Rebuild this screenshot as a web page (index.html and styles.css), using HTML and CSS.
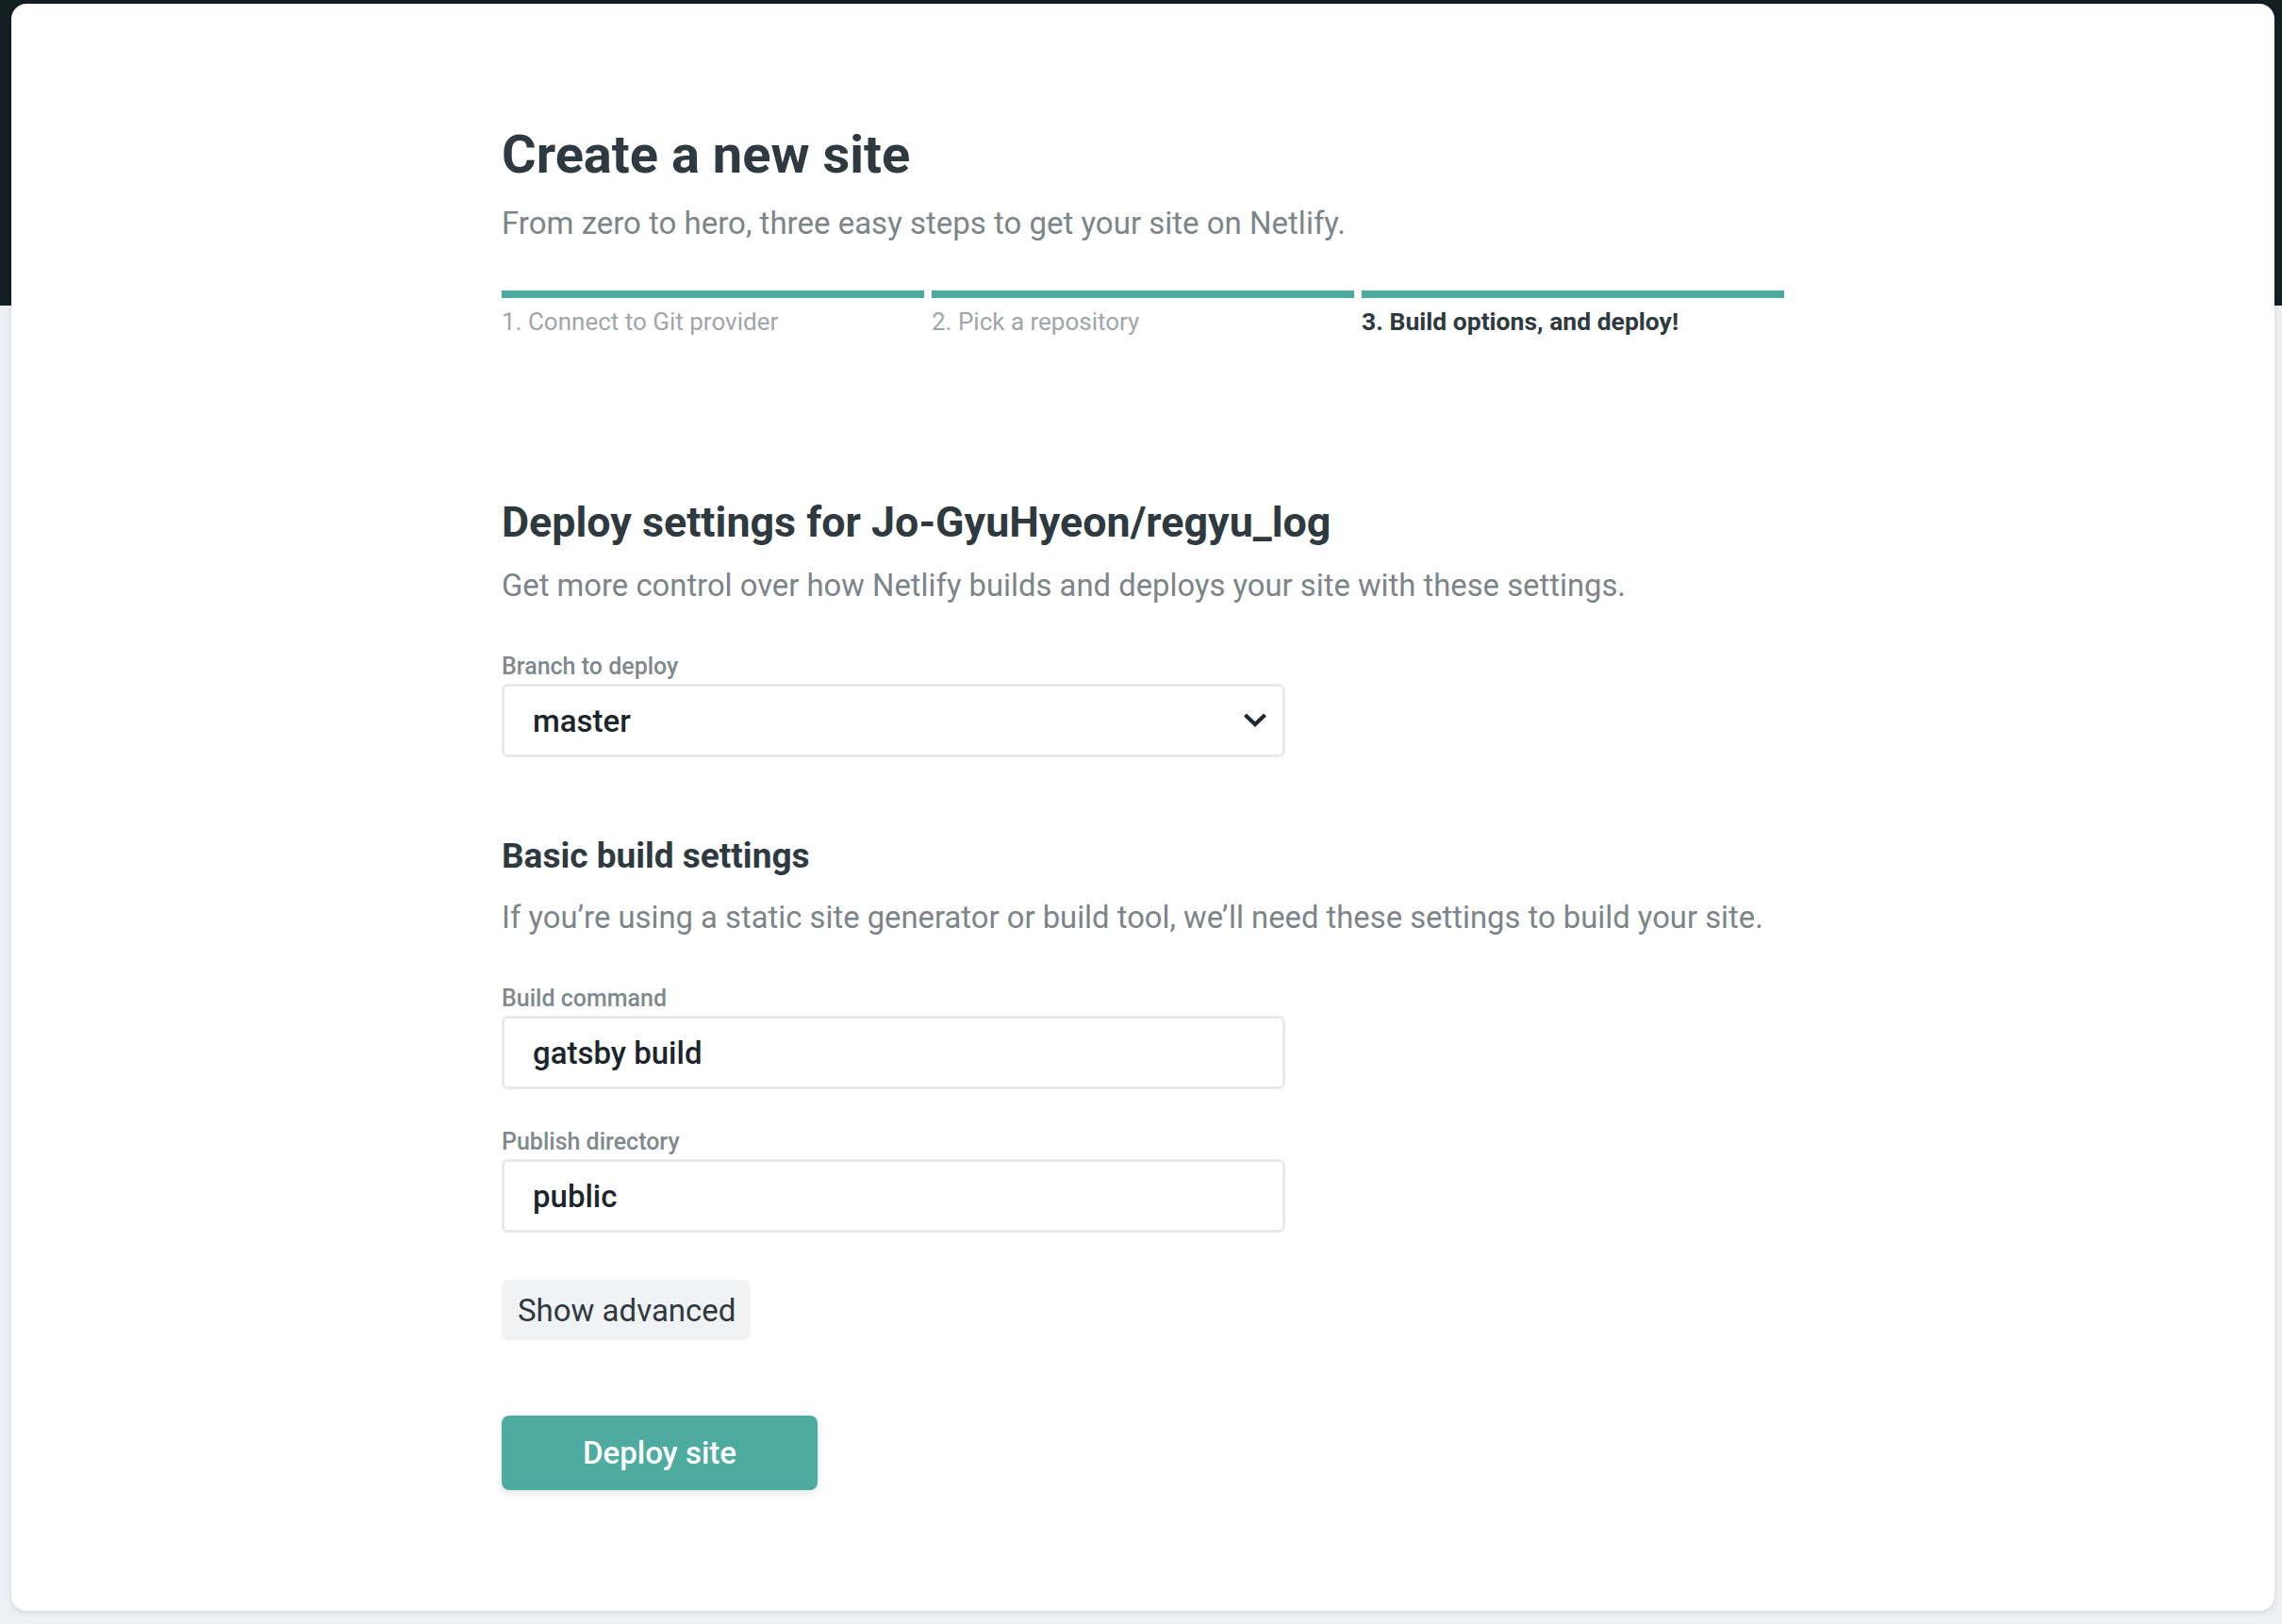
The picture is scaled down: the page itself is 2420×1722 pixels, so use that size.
FILE: index.html
```html
<!DOCTYPE html>
<html lang="en">
<head>
<meta charset="utf-8">
<title>Create a new site</title>
<link rel="stylesheet" href="styles.css">
</head>
<body>
<div class="page">
  <main class="card">
    <div class="content">
      <h1 class="title">Create a new site</h1>
      <p class="lead">From zero to hero, three easy steps to get your site on Netlify.</p>

      <ol class="steps">
        <li class="step"><span class="bar"></span><span class="step-label">1. Connect to Git provider</span></li>
        <li class="step"><span class="bar"></span><span class="step-label">2. Pick a repository</span></li>
        <li class="step step-current"><span class="bar"></span><span class="step-label">3. Build options, and deploy!</span></li>
      </ol>

      <section class="section">
        <h2 class="section-title">Deploy settings for Jo-GyuHyeon/regyu_log</h2>
        <p class="section-desc">Get more control over how Netlify builds and deploys your site with these settings.</p>
        <div class="field">
          <label class="field-label">Branch to deploy</label>
          <div class="control select">
            <span class="control-value">master</span>
            <svg class="chevron" width="24" height="16" viewBox="0 0 24 16" aria-hidden="true"><path d="M3 3.5 L12 12 L21 3.5" fill="none" stroke="#1d2a31" stroke-width="4.2" stroke-linecap="square" stroke-linejoin="miter"/></svg>
          </div>
        </div>
      </section>

      <section class="section section-build">
        <h3 class="sub-title">Basic build settings</h3>
        <p class="section-desc desc-build">If you’re using a static site generator or build tool, we’ll need these settings to build your site.</p>
        <div class="field">
          <label class="field-label">Build command</label>
          <div class="control"><span class="control-value">gatsby build</span></div>
        </div>
        <div class="field field-second">
          <label class="field-label">Publish directory</label>
          <div class="control"><span class="control-value">public</span></div>
        </div>
        <button class="btn-secondary" type="button">Show advanced</button>
      </section>

      <button class="btn-primary" type="button">Deploy site</button>
    </div>
  </main>
</div>
</body>
</html>
```

FILE: styles.css
```css
html, body {
  margin: 0;
  padding: 0;
}

body {
  font-family: Roboto, "Liberation Sans", Arial, sans-serif;
  background: linear-gradient(to bottom, #141f24 0, #141f24 324px, #eef1f4 324px, #eef1f4 100%);
  min-height: 1722px;
  color: #2e3a40;
}

.page {
  padding: 4px 8px 14px 12px;
}

.card {
  background: #ffffff;
  border-radius: 16px;
  box-shadow: 0 2px 6px rgba(30, 45, 60, 0.12);
  padding: 127px 0 128px;
}

.content {
  width: 1360px;
  margin: 0 auto;
}

.title {
  margin: 0;
  font-size: 56px;
  line-height: 67px;
  font-weight: 700;
  color: #2e3a40;
}

.lead {
  margin: 15px 0 0;
  font-size: 33px;
  line-height: 48px;
  color: #7c8589;
}

.steps {
  list-style: none;
  margin: 47px 0 0;
  padding: 0;
  display: flex;
  gap: 8px;
}

.step {
  flex: 1;
  display: flex;
  flex-direction: column;
}

.bar {
  display: block;
  height: 8px;
  background: #4eab9f;
}

.step-label {
  margin-top: 7px;
  font-size: 26px;
  line-height: 36px;
  color: #a0a6a9;
}

.step-current .step-label {
  color: #2e3a40;
  font-weight: 700;
  font-size: 26.5px;
}

.section {
  margin-top: 168px;
}

.section-title {
  margin: 0;
  font-size: 44.8px;
  line-height: 53px;
  font-weight: 700;
  color: #2e3a40;
}

.section-desc {
  margin: 17px 0 0;
  font-size: 32.8px;
  line-height: 48px;
  color: #7c8589;
}

.field {
  margin-top: 45px;
  width: 831px;
}

.field-second {
  margin-top: 39px;
}

.field-label {
  display: block;
  font-size: 25px;
  line-height: 34px;
  font-weight: 500;
  color: #80898d;
}

.control {
  margin-top: 1px;
  box-sizing: border-box;
  height: 78px;
  border: 3px solid #e8eaea;
  border-radius: 7px;
  padding: 0 17px 0 30px;
  display: flex;
  align-items: center;
  justify-content: space-between;
  background: #fff;
}

.control-value {
  font-size: 33px;
  font-weight: 500;
  color: #1b252b;
}

.chevron {
  display: block;
}

.section-build {
  margin-top: 83px;
}

.sub-title {
  margin: 0;
  font-size: 37px;
  line-height: 43px;
  font-weight: 700;
  color: #2e3a40;
}

.desc-build {
  margin-top: 20px;
}

.btn-secondary {
  display: block;
  margin-top: 50px;
  height: 64px;
  padding: 0 16px 0 17px;
  border: 0;
  border-radius: 8px;
  background: #f0f2f3;
  font-family: Roboto, "Liberation Sans", Arial, sans-serif;
  font-size: 33px;
  color: #2e3a40;
}

.btn-primary {
  display: block;
  margin-top: 80px;
  width: 335px;
  height: 79px;
  border: 0;
  border-radius: 8px;
  background: #4eab9f;
  box-shadow: 0 4px 8px rgba(20, 60, 60, 0.12);
  font-family: Roboto, "Liberation Sans", Arial, sans-serif;
  font-size: 33px;
  font-weight: 500;
  color: #ffffff;
}
```
